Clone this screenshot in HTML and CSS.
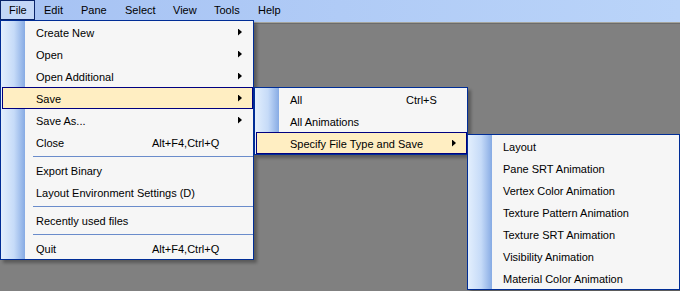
FILE: index.html
```html
<!DOCTYPE html>
<html lang="en">
<head>
  <meta charset="UTF-8">
  <title>Layout Editor - File menu</title>
  <link rel="stylesheet" href="styles.css">
</head>
<body>
  <div class="menubar">
    <div class="menubar-item open">File</div>
    <div class="menubar-item">Edit</div>
    <div class="menubar-item">Pane</div>
    <div class="menubar-item">Select</div>
    <div class="menubar-item">View</div>
    <div class="menubar-item">Tools</div>
    <div class="menubar-item">Help</div>
  </div>

  <!-- File -->
  <div class="menu menu-file">
    <div class="menu-item"><span class="label">Create New</span><span class="arrow"></span></div>
    <div class="menu-item"><span class="label">Open</span><span class="arrow"></span></div>
    <div class="menu-item"><span class="label">Open Additional</span><span class="arrow"></span></div>
    <div class="menu-item active"><span class="label">Save</span><span class="arrow"></span></div>
    <div class="menu-item"><span class="label">Save As...</span><span class="arrow"></span></div>
    <div class="menu-item"><span class="label">Close</span><span class="shortcut">Alt+F4,Ctrl+Q</span></div>
    <div class="separator"></div>
    <div class="menu-item"><span class="label">Export Binary</span></div>
    <div class="menu-item"><span class="label">Layout Environment Settings (D)</span></div>
    <div class="separator"></div>
    <div class="menu-item"><span class="label">Recently used files</span></div>
    <div class="separator"></div>
    <div class="menu-item"><span class="label">Quit</span><span class="shortcut">Alt+F4,Ctrl+Q</span></div>
  </div>

  <!-- File > Save -->
  <div class="menu menu-save">
    <div class="menu-item"><span class="label">All</span><span class="shortcut">Ctrl+S</span></div>
    <div class="menu-item"><span class="label">All Animations</span></div>
    <div class="menu-item active"><span class="label">Specify File Type and Save</span><span class="arrow"></span></div>
  </div>

  <!-- File > Save > Specify File Type and Save -->
  <div class="menu menu-filetype">
    <div class="menu-item"><span class="label">Layout</span></div>
    <div class="menu-item"><span class="label">Pane SRT Animation</span></div>
    <div class="menu-item"><span class="label">Vertex Color Animation</span></div>
    <div class="menu-item"><span class="label">Texture Pattern Animation</span></div>
    <div class="menu-item"><span class="label">Texture SRT Animation</span></div>
    <div class="menu-item"><span class="label">Visibility Animation</span></div>
    <div class="menu-item"><span class="label">Material Color Animation</span></div>
  </div>
</body>
</html>
```

FILE: styles.css
```css
/* Workspace */
body {
  margin: 0;
  height: 291px;
  overflow: hidden;
  position: relative;
  background-color: #808080;
  font-family: "Liberation Sans", Arial, sans-serif;
  font-size: 11px;
  color: #000;
}

/* Menu bar */
.menubar {
  height: 22px;
  display: grid;
  grid-template-columns: 35px 37px 44px 48px 41px 44px auto;
  background: linear-gradient(to right, #a6c2f3, #bad4f9);
  border-bottom: 1px solid #a5a49b;
  box-shadow: 0 1px 0 #6c6c6c;
}

.menubar-item {
  height: 20px;
  line-height: 18px;
  box-sizing: border-box;
  padding-left: 8px;
  border: 1px solid transparent;
  white-space: nowrap;
}

.menubar-item.open {
  background-color: #c3d7f7;
  border-color: #0a246a;
}

/* Popup menus */
.menu {
  position: absolute;
  box-sizing: border-box;
  border: 1px solid #002d96;
  background: linear-gradient(to right, #e3effd 0, #c6dbf8 13px, #87abe4 24px, #f6f6f6 24px);
  box-shadow: 3px 3px 3px rgba(0, 0, 0, 0.3);
}

.menu-file {
  left: 0;
  top: 20px;
  width: 254px;
}

.menu-save {
  left: 254px;
  top: 87px;
  width: 214px;
}

.menu-filetype {
  left: 467px;
  top: 134px;
  width: 213px;
}

.menu-item {
  display: flex;
  align-items: center;
  height: 22px;
  box-sizing: border-box;
  margin-left: 1px;
  padding: 2px 10px 0 33px;
  border: 1px solid transparent;
  white-space: nowrap;
}

.menu-item.active {
  background-color: #ffeec2;
  border-color: #000080;
}

.label {
  min-width: 116px;
}

.arrow {
  margin-left: auto;
  width: 4px;
  height: 7px;
  margin-top: -2px;
  background-color: #000;
  clip-path: polygon(0 0, 100% 50%, 0 100%);
}

.separator {
  height: 1px;
  margin: 3px 0 2px 32px;
  background-color: #6a8ccb;
}
```
